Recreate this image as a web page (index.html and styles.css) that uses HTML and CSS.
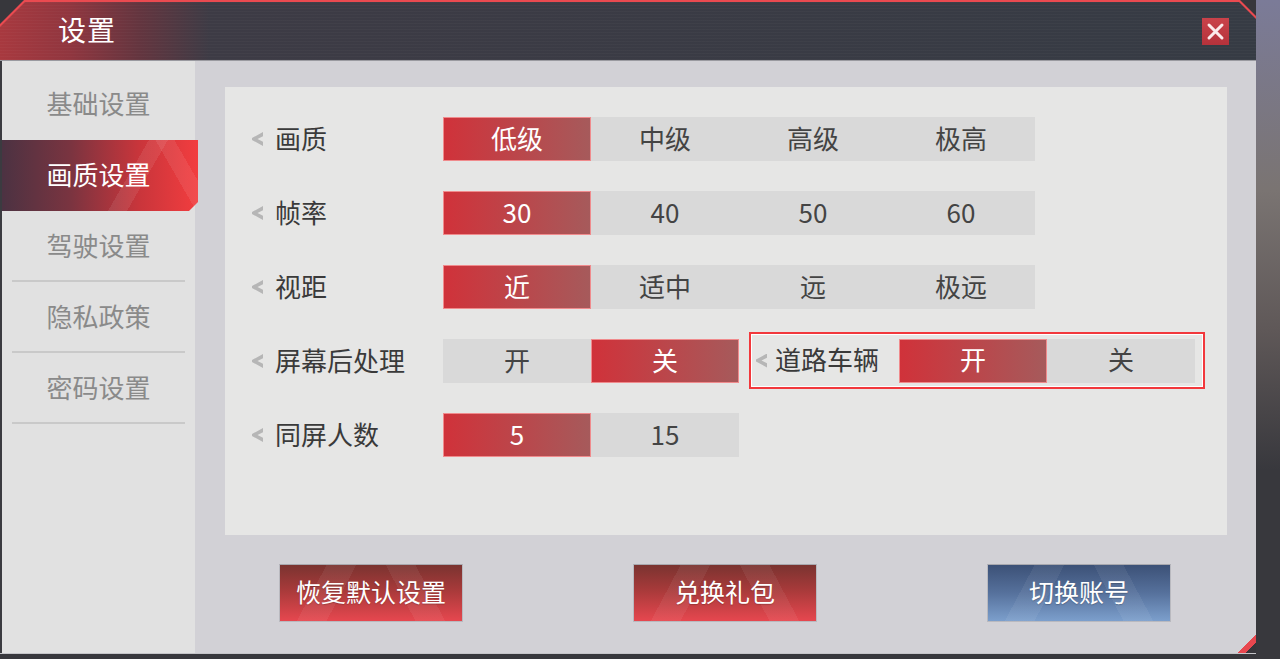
FILE: index.html
```html
<!DOCTYPE html>
<html>
  <head>
    <title>设置</title>
    <link rel="stylesheet" href="styles.css">
  </head>
  <body>
    <div class="screen">
      <div class="dialog">
        <div class="titlebar">
          <div class="titlebar-inner">
            <h1>设置</h1>
            <button class="close-btn">
              <svg width="27" height="27" viewBox="0 0 27 27">
                <path d="M7 7 L20 20 M20 7 L7 20" stroke="#fbe9ea" stroke-width="3" stroke-linecap="round" />
              </svg>
            </button>
          </div>
        </div>

        <div class="dialog-body">
          <nav class="sidebar">
            <div class="nav-item">基础设置</div>
            <div class="nav-item active">画质设置</div>
            <div class="nav-item line">驾驶设置</div>
            <div class="nav-item line">隐私政策</div>
            <div class="nav-item line">密码设置</div>
          </nav>

          <main class="content">
            <div class="panel">
              <div class="opt-row">
                <div class="opt-label"><i class="chev"></i>画质</div>
                <div class="opt-group">
                  <span class="opt selected">低级</span>
                  <span class="opt">中级</span>
                  <span class="opt">高级</span>
                  <span class="opt">极高</span>
                </div>
              </div>

              <div class="opt-row">
                <div class="opt-label"><i class="chev"></i>帧率</div>
                <div class="opt-group">
                  <span class="opt selected">30</span>
                  <span class="opt">40</span>
                  <span class="opt">50</span>
                  <span class="opt">60</span>
                </div>
              </div>

              <div class="opt-row">
                <div class="opt-label"><i class="chev"></i>视距</div>
                <div class="opt-group">
                  <span class="opt selected">近</span>
                  <span class="opt">适中</span>
                  <span class="opt">远</span>
                  <span class="opt">极远</span>
                </div>
              </div>

              <div class="opt-row">
                <div class="opt-label"><i class="chev"></i>屏幕后处理</div>
                <div class="opt-group">
                  <span class="opt">开</span>
                  <span class="opt selected">关</span>
                </div>
                <div class="opt-box">
                  <div class="opt-label"><i class="chev"></i>道路车辆</div>
                  <div class="opt-group">
                    <span class="opt selected">开</span>
                    <span class="opt">关</span>
                  </div>
                </div>
              </div>

              <div class="opt-row">
                <div class="opt-label"><i class="chev"></i>同屏人数</div>
                <div class="opt-group">
                  <span class="opt selected">5</span>
                  <span class="opt">15</span>
                </div>
              </div>
            </div>

            <div class="actions">
              <button class="action red">恢复默认设置</button>
              <button class="action red">兑换礼包</button>
              <button class="action blue">切换账号</button>
            </div>
          </main>
        </div>
      </div>
      <div class="backdrop"></div>
    </div>
  </body>
</html>
```

FILE: styles.css
```css
body {
  margin: 0;
  font-family: "Noto Sans CJK SC", "Noto Sans", sans-serif;
  background-color: #37373c;
}

.screen {
  display: flex;
  width: 1280px;
  height: 659px;
  overflow: hidden;
}

.dialog {
  width: 1256px;
  height: 654px;
  display: flex;
  flex-direction: column;
}

.backdrop {
  flex: 1;
  background: linear-gradient(180deg, #7b7b98 0, #7a7472 190px, #5f5858 330px, #38383d 470px);
}

/* title bar */
.titlebar {
  height: 61px;
  flex-shrink: 0;
  box-sizing: border-box;
  padding-top: 2px;
  background: #ea4a50;
  clip-path: polygon(0 24px, 24px 0, calc(100% - 16px) 0, 100% 16px, 100% 100%, 0 100%);
}

.titlebar-inner {
  height: 100%;
  box-sizing: border-box;
  display: flex;
  align-items: center;
  justify-content: space-between;
  padding: 0 27px 0 58px;
  border-bottom: 1px solid #9a9aa0;
  background:
    repeating-linear-gradient(0deg, rgba(255, 255, 255, 0.025) 0 1px, transparent 1px 3px),
    linear-gradient(90deg, #a8393f 0, #90363f 70px, #63353f 140px, #3d3b45 210px, #363b44 100%);
  clip-path: polygon(0 25px, 25px 0, calc(100% - 17px) 0, 100% 17px, 100% 100%, 0 100%);
}

.titlebar h1 {
  margin: 0 0 4px;
  color: #fff;
  font-size: 28px;
  font-weight: 400;
  letter-spacing: 1px;
}

.close-btn {
  width: 27px;
  height: 27px;
  padding: 0;
  border: none;
  background: linear-gradient(180deg, #c9424a, #b5323b);
  cursor: pointer;
}

.close-btn svg {
  display: block;
}

/* body */
.dialog-body {
  flex: 1;
  display: flex;
  border-bottom: 1px solid #c4c4c8;
}

.sidebar {
  width: 193px;
  border-left: 2px solid #3b3b40;
  background: #e1e1e1;
  padding-top: 8px;
  position: relative;
  z-index: 1;
}

.nav-item {
  height: 71px;
  box-sizing: border-box;
  margin: 0 10px;
  padding-bottom: 5px;
  display: flex;
  align-items: center;
  justify-content: center;
  font-size: 26px;
  color: #8a8a8a;
}

.nav-item.line {
  border-bottom: 2px solid #c9c9c9;
  padding-bottom: 3px;
}

.nav-item.active {
  margin: 0 -3px 0 0;
  padding-right: 3px;
  color: #fff;
  background:
    linear-gradient(120deg, transparent 62%, rgba(255, 255, 255, 0.08) 62% 70%, transparent 70%),
    linear-gradient(60deg, transparent 82%, rgba(255, 255, 255, 0.08) 82% 90%, transparent 90%),
    linear-gradient(90deg, #4c3242 0, #7a3440 35%, #c9353b 70%, #f23d3f 100%);
  clip-path: polygon(0 0, 100% 0, 100% calc(100% - 9px), calc(100% - 9px) 100%, 0 100%);
}

.content {
  flex: 1;
  background: #d2d1d6;
  padding: 26px 29px 0 30px;
  position: relative;
}

.content::after {
  content: "";
  position: absolute;
  right: 0;
  bottom: 0;
  width: 18px;
  height: 18px;
  background: linear-gradient(135deg, transparent 0 48%, #e8474f 48% 72%, #37363b 72%);
}

.panel {
  height: 448px;
  box-sizing: border-box;
  background: #e6e6e5;
  padding: 30px 0 0 27px;
  display: flex;
  flex-direction: column;
  gap: 30px;
}

.opt-row {
  display: flex;
  align-items: center;
  height: 44px;
}

.opt-label {
  width: 191px;
  display: flex;
  align-items: center;
  gap: 12px;
  font-size: 26px;
  color: #3a3a3a;
  padding-bottom: 4px;
}

.chev {
  width: 11px;
  height: 14px;
  margin-top: 4px;
  background: #b6b6b6;
  clip-path: polygon(100% 0, 100% 30%, 50% 50%, 100% 70%, 100% 100%, 0 57%, 0 43%);
}

.opt-group {
  display: flex;
  background: #d9d9d9;
}

.opt {
  width: 148px;
  height: 44px;
  box-sizing: border-box;
  display: flex;
  align-items: center;
  justify-content: center;
  padding-bottom: 4px;
  font-size: 26px;
  color: #444;
}

.opt.selected {
  color: #fff;
  border: 1px solid #f08b8d;
  background: linear-gradient(90deg, #d0323a, #a65a5b);
}

.opt-box {
  display: flex;
  align-items: center;
  height: 57px;
  box-sizing: border-box;
  margin: -7px 0 -6px 10px;
  padding: 0 8px 0 5px;
  border: 2px solid #f2383c;
  box-shadow: inset 0 0 0 1px #fff;
}

.opt-box .opt-label {
  width: 143px;
  gap: 8px;
}

/* bottom buttons */
.actions {
  display: flex;
  gap: 170px;
  margin: 29px 0 0 54px;
}

.action {
  width: 184px;
  height: 58px;
  box-sizing: border-box;
  padding: 0 0 4px;
  border: 1px solid #b9b9bf;
  border-top-color: #a8a8ae;
  font-family: inherit;
  font-size: 25px;
  color: #fff;
  cursor: pointer;
  text-shadow: 0 1px 1px rgba(0, 0, 0, 0.2);
}

.action.red {
  background:
    linear-gradient(118deg, transparent 22%, rgba(255, 255, 255, 0.06) 22% 36%, transparent 36%),
    linear-gradient(62deg, transparent 64%, rgba(255, 255, 255, 0.06) 64% 78%, transparent 78%),
    linear-gradient(180deg, #7a3330 0, #a83a3a 45%, #e6474f 100%);
}

.action.blue {
  background:
    linear-gradient(118deg, transparent 22%, rgba(255, 255, 255, 0.06) 22% 36%, transparent 36%),
    linear-gradient(62deg, transparent 64%, rgba(255, 255, 255, 0.06) 64% 78%, transparent 78%),
    linear-gradient(180deg, #3c5177 0, #56719c 50%, #7c9fcc 100%);
}
```
